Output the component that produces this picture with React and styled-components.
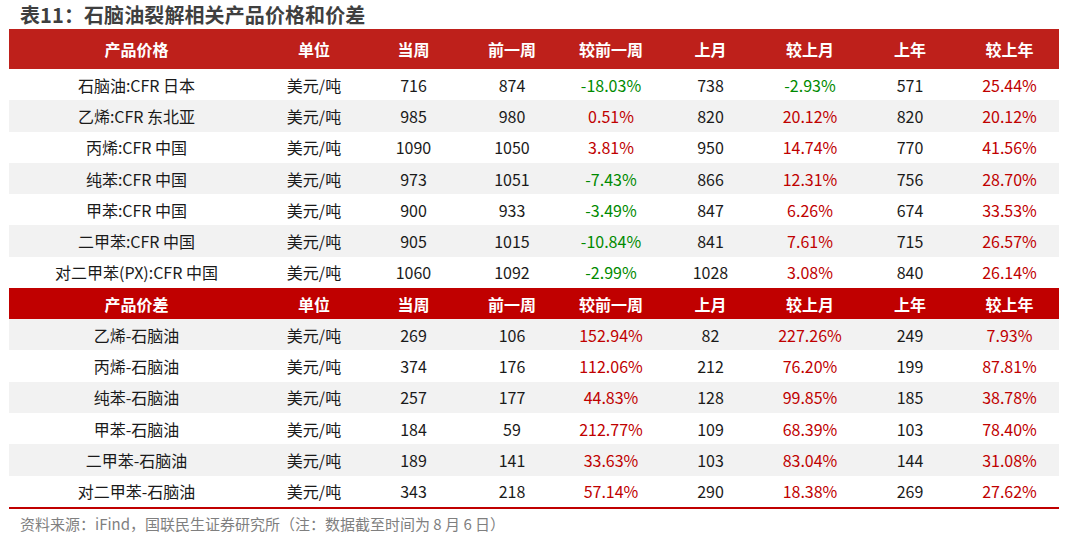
import React from 'react'
import styled, { createGlobalStyle } from 'styled-components'

const GlobalStyle = createGlobalStyle`
  html, body {
    margin: 0;
    padding: 0;
    background: #ffffff;
  }
  body {
    font-family: "Noto Sans CJK SC", "Noto Sans", sans-serif;
  }
`

const Page = styled.div`
  width: 1067px;
  height: 539px;
  padding: 0 8px 0 9px;
  box-sizing: border-box;
  display: flex;
  flex-direction: column;
`

const Title = styled.div`
  height: 29px;
  padding-left: 11px;
  font-size: 20px;
  font-weight: 700;
  color: #3f3f3f;
  line-height: 30px;
  letter-spacing: 0.1px;
  overflow: hidden;
`

const Table = styled.div`
  width: 1050px;
  display: grid;
  grid-template-columns: 255px 100px 99px 98px 100px 99px 100px 100px 99px;
  border-bottom: 2px solid #c00000;
`

const HeadCell = styled.div`
  height: ${({ $h }) => $h}px;
  background: ${({ $bg }) => $bg};
  color: #ffffff;
  font-size: 16px;
  font-weight: 700;
  display: flex;
  align-items: center;
  justify-content: center;
`

const Cell = styled.div`
  height: 31.3px;
  background: ${({ $grey }) => ($grey ? '#f2f2f2' : '#ffffff')};
  color: ${({ $tone }) =>
    $tone === 'up' ? '#c00000' : $tone === 'down' ? '#008a00' : '#1a1a1a'};
  font-size: 16px;
  display: flex;
  align-items: center;
  justify-content: center;
  white-space: nowrap;
`

const Source = styled.div`
  padding: 4px 0 0 11px;
  font-size: 15px;
  color: #7f7f7f;
`

const priceHead = ['产品价格', '单位', '当周', '前一周', '较前一周', '上月', '较上月', '上年', '较上年']
const spreadHead = ['产品价差', '单位', '当周', '前一周', '较前一周', '上月', '较上月', '上年', '较上年']

const prices = [
  ['石脑油:CFR 日本', '716', '874', '-18.03%', '738', '-2.93%', '571', '25.44%'],
  ['乙烯:CFR 东北亚', '985', '980', '0.51%', '820', '20.12%', '820', '20.12%'],
  ['丙烯:CFR 中国', '1090', '1050', '3.81%', '950', '14.74%', '770', '41.56%'],
  ['纯苯:CFR 中国', '973', '1051', '-7.43%', '866', '12.31%', '756', '28.70%'],
  ['甲苯:CFR 中国', '900', '933', '-3.49%', '847', '6.26%', '674', '33.53%'],
  ['二甲苯:CFR 中国', '905', '1015', '-10.84%', '841', '7.61%', '715', '26.57%'],
  ['对二甲苯(PX):CFR 中国', '1060', '1092', '-2.99%', '1028', '3.08%', '840', '26.14%'],
]

const spreads = [
  ['乙烯-石脑油', '269', '106', '152.94%', '82', '227.26%', '249', '7.93%'],
  ['丙烯-石脑油', '374', '176', '112.06%', '212', '76.20%', '199', '87.81%'],
  ['纯苯-石脑油', '257', '177', '44.83%', '128', '99.85%', '185', '38.78%'],
  ['甲苯-石脑油', '184', '59', '212.77%', '109', '68.39%', '103', '78.40%'],
  ['二甲苯-石脑油', '189', '141', '33.63%', '103', '83.04%', '144', '31.08%'],
  ['对二甲苯-石脑油', '343', '218', '57.14%', '290', '18.38%', '269', '27.62%'],
]

const tone = (v) => (v.startsWith('-') ? 'down' : 'up')

const Rows = ({ rows, greyFirst }) =>
  rows.map((r, i) => {
    const grey = greyFirst ? i % 2 === 0 : i % 2 === 1
    const [name, cur, prev, wk, mon, monPct, yr, yrPct] = r
    return (
      <React.Fragment key={name}>
        <Cell $grey={grey}>{name}</Cell>
        <Cell $grey={grey}>美元/吨</Cell>
        <Cell $grey={grey}>{cur}</Cell>
        <Cell $grey={grey}>{prev}</Cell>
        <Cell $grey={grey} $tone={tone(wk)}>{wk}</Cell>
        <Cell $grey={grey}>{mon}</Cell>
        <Cell $grey={grey} $tone={tone(monPct)}>{monPct}</Cell>
        <Cell $grey={grey}>{yr}</Cell>
        <Cell $grey={grey} $tone={tone(yrPct)}>{yrPct}</Cell>
      </React.Fragment>
    )
  })

const App = () => (
  <Page>
    <GlobalStyle />
    <Title>表11：石脑油裂解相关产品价格和价差</Title>
    <Table>
      {priceHead.map((h) => (
        <HeadCell key={'p' + h} $h={40} $bg="#be201b">{h}</HeadCell>
      ))}
      <Rows rows={prices} greyFirst={false} />
      {spreadHead.map((h) => (
        <HeadCell key={'s' + h} $h={31} $bg="#c00000">{h}</HeadCell>
      ))}
      <Rows rows={spreads} greyFirst />
    </Table>
    <Source>资料来源：iFind，国联民生证券研究所（注：数据截至时间为 8 月 6 日）</Source>
  </Page>
)

export default App
